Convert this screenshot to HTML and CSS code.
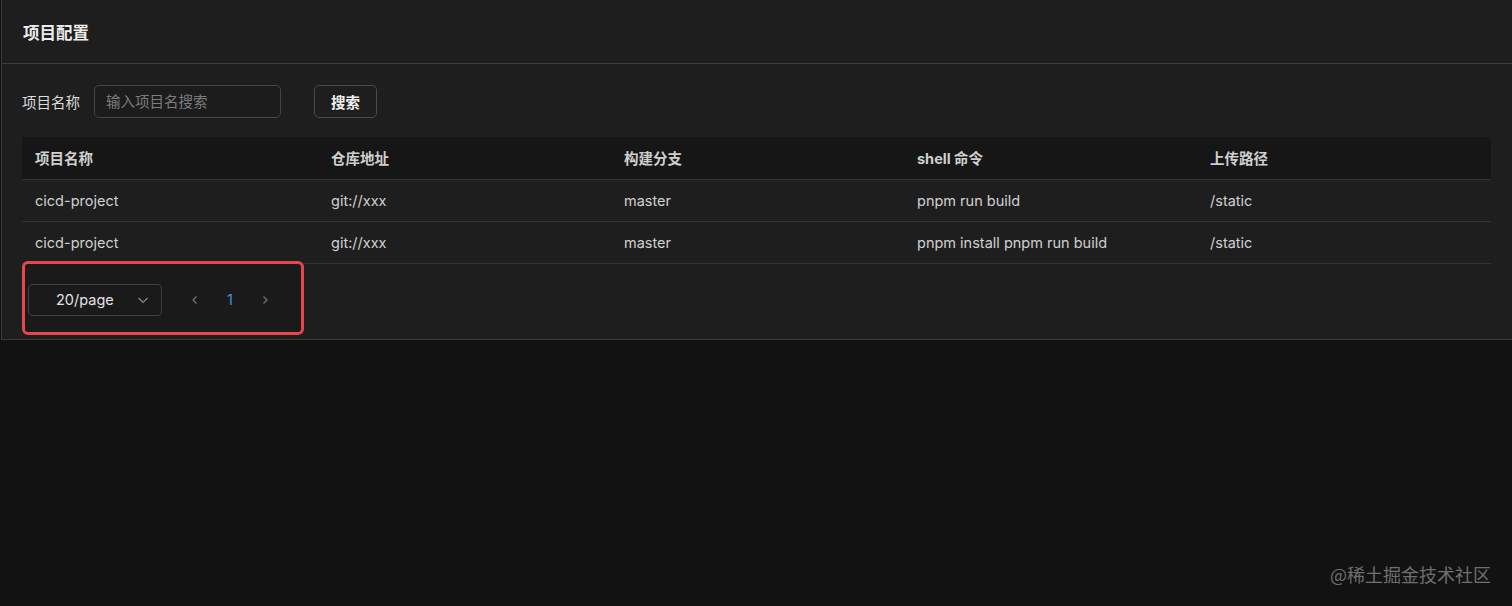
FILE: index.html
```html
<!DOCTYPE html>
<html lang="zh-CN">
<head>
  <meta charset="UTF-8" />
  <title>项目配置</title>
  <link rel="stylesheet" href="styles.css">
</head>
<body>
  <div class="card">
    <div class="card-header">项目配置</div>

    <div class="card-body">
      <div class="search-bar">
        <label class="search-label">项目名称</label>
        <input type="text" class="search-input" placeholder="输入项目名搜索" />
        <button class="search-btn">搜索</button>
      </div>

      <table class="project-table">
        <colgroup>
          <col class="col-wide" />
          <col class="col" />
          <col class="col" />
          <col class="col" />
          <col />
        </colgroup>
        <thead>
          <tr>
            <th>项目名称</th>
            <th>仓库地址</th>
            <th>构建分支</th>
            <th>shell 命令</th>
            <th>上传路径</th>
          </tr>
        </thead>
        <tbody>
          <tr>
            <td>cicd-project</td>
            <td>git://xxx</td>
            <td>master</td>
            <td>pnpm run build</td>
            <td>/static</td>
          </tr>
          <tr>
            <td>cicd-project</td>
            <td>git://xxx</td>
            <td>master</td>
            <td>pnpm install pnpm run build</td>
            <td>/static</td>
          </tr>
        </tbody>
      </table>

      <!-- highlighted pagination -->
      <div class="pager">
        <div class="page-size">
          <span>20/page</span>
          <svg width="12" height="12" viewBox="0 0 12 12"><path d="M1.5 4 L6 8.5 L10.5 4" fill="none" stroke="#8a8a8a" stroke-width="1.1"/></svg>
        </div>
        <div class="page-btn">
          <svg width="10" height="10" viewBox="0 0 10 10"><path d="M6.5 1.5 L3 5 L6.5 8.5" fill="none" stroke="#7a7a7a" stroke-width="1.1"/></svg>
        </div>
        <div class="page-btn current">1</div>
        <div class="page-btn">
          <svg width="10" height="10" viewBox="0 0 10 10"><path d="M3.5 1.5 L7 5 L3.5 8.5" fill="none" stroke="#7a7a7a" stroke-width="1.1"/></svg>
        </div>
      </div>
    </div>
  </div>

  <div class="watermark">@稀土掘金技术社区</div>
</body>
</html>
```

FILE: styles.css
```css
* {
  box-sizing: border-box;
}

body {
  margin: 0;
  height: 606px;
  background-color: #121212;
  color: #d2d2d2;
  font-family: Inter, "Noto Sans CJK SC", sans-serif;
  font-size: 14.5px;
  overflow: hidden;
}

.card {
  background-color: #1e1e1e;
  border-left: 1px solid #3a3a3a;
  border-bottom: 1px solid #3a3a3a;
  margin-left: 1px;
}

.card-header {
  height: 64px;
  padding: 0 21px;
  display: flex;
  align-items: center;
  font-size: 16.5px;
  font-weight: bold;
  color: #ececec;
  border-bottom: 1px solid #3c3c3c;
}

.card-body {
  padding: 21px 20px 4px 20px;
}

.search-bar {
  display: flex;
  align-items: center;
  height: 33px;
}

.search-label {
  color: #dcdcdc;
  margin-right: 14px;
}

.search-input {
  width: 187px;
  height: 33px;
  padding: 0 11px;
  background-color: #1c1c1c;
  border: 1px solid #454545;
  border-radius: 5px;
  color: #ddd;
  font-family: inherit;
  font-size: 14.5px;
  margin-right: 33px;
}

.search-input::placeholder {
  color: #7c7c7c;
}

.search-btn {
  width: 63px;
  height: 33px;
  background-color: #1e1e1e;
  border: 1px solid #4a4a4a;
  border-radius: 5px;
  color: #f0f0f0;
  font-family: inherit;
  font-size: 14.5px;
  font-weight: bold;
}

.project-table {
  width: 1469px;
  margin-top: 19px;
  border-collapse: collapse;
  table-layout: fixed;
}

.col-wide {
  width: 296px;
}

.col {
  width: 293px;
}

.project-table th,
.project-table td {
  text-align: left;
  padding: 0 13px;
  border-bottom: 1px solid #333;
}

.project-table th {
  height: 42px;
  background-color: #161616;
  color: #cfcfcf;
  font-weight: bold;
}

.project-table td {
  height: 42px;
  color: #d0d0d0;
}

.pager {
  display: inline-flex;
  align-items: center;
  margin-top: -3px;
  padding: 20px 20px 16px 3px;
  border: 3px solid #e5474c;
  border-radius: 6px;
  background-color: #1a1a1a;
}

.page-size {
  width: 134px;
  height: 32px;
  display: flex;
  align-items: center;
  justify-content: space-between;
  padding: 0 12px 0 27px;
  border: 1px solid #3f3f3f;
  border-radius: 4px;
  color: #e2e2e2;
  margin-right: 17px;
}

.page-btn {
  width: 32px;
  height: 32px;
  display: flex;
  align-items: center;
  justify-content: center;
  margin-right: 3px;
}

.page-btn:last-child {
  margin-right: 0;
}

.page-btn.current {
  color: #4b8fe6;
}

.watermark {
  position: absolute;
  right: 21px;
  bottom: 19px;
  font-size: 18px;
  color: #6f6f6f;
  font-family: "Noto Sans CJK SC", sans-serif;
}
```
